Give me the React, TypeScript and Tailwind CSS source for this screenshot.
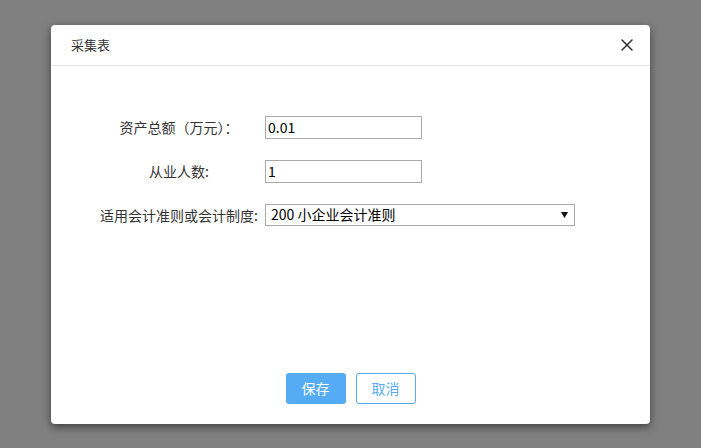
import { X } from "lucide-react";

const font = { fontFamily: '"Noto Sans CJK SC", "Noto Sans", sans-serif' };

function Row({ label, children }: { label: string; children: React.ReactNode }) {
  return (
    <div className="flex items-center pl-[48px]">
      <label className="w-[160px] shrink-0 mr-[6px] text-center text-[14px] leading-[20px] text-[#333] whitespace-nowrap">
        {label}
      </label>
      {children}
    </div>
  );
}

export default function App() {
  return (
    <div className="h-screen w-full flex items-center justify-center bg-[#808080]" style={font}>
      <div className="w-[599px] h-[399px] bg-white rounded-[4px] shadow-[0_3px_9px_rgba(0,0,0,0.5)] flex flex-col">
        <div className="h-[41px] shrink-0 flex items-center justify-between px-5 border-b border-[#e5e5e5]">
          <span className="text-[13px] text-[#333]">采集表</span>
          <X className="w-[20px] h-[20px] text-[#333] mr-[-7px]" strokeWidth={1.8} />
        </div>

        <div className="flex-1 flex flex-col gap-[21px] pt-[50px]">
          <Row label="资产总额（万元）：">
            <input
              defaultValue="0.01"
              className="w-[157px] h-[23px] border border-[#a9a9a9] px-[2px] text-[14px] text-black outline-none"
            />
          </Row>
          <Row label="从业人数:">
            <input
              defaultValue="1"
              className="w-[157px] h-[23px] border border-[#a9a9a9] px-[2px] text-[14px] text-black outline-none"
            />
          </Row>
          <Row label="适用会计准则或会计制度:">
            <div className="relative w-[310px] h-[22px] border border-[#a9a9a9] flex items-center px-[5px] text-[14px] text-black">
              <span>200 小企业会计准则</span>
              <svg className="absolute right-[6px] top-[7px]" width="7" height="6" viewBox="0 0 7 6">
                <path d="M0 0 H7 L3.5 6 Z" fill="#111" />
              </svg>
            </div>
          </Row>
        </div>

        <div className="flex justify-center gap-[10px] pb-[20px]">
          <button className="w-[60px] h-[31px] rounded-[3px] bg-[#55acf5] text-white text-[14px]">保存</button>
          <button className="w-[60px] h-[31px] rounded-[3px] border border-[#55acf5] bg-white text-[#55acf5] text-[14px]">取消</button>
        </div>
      </div>
    </div>
  );
}
